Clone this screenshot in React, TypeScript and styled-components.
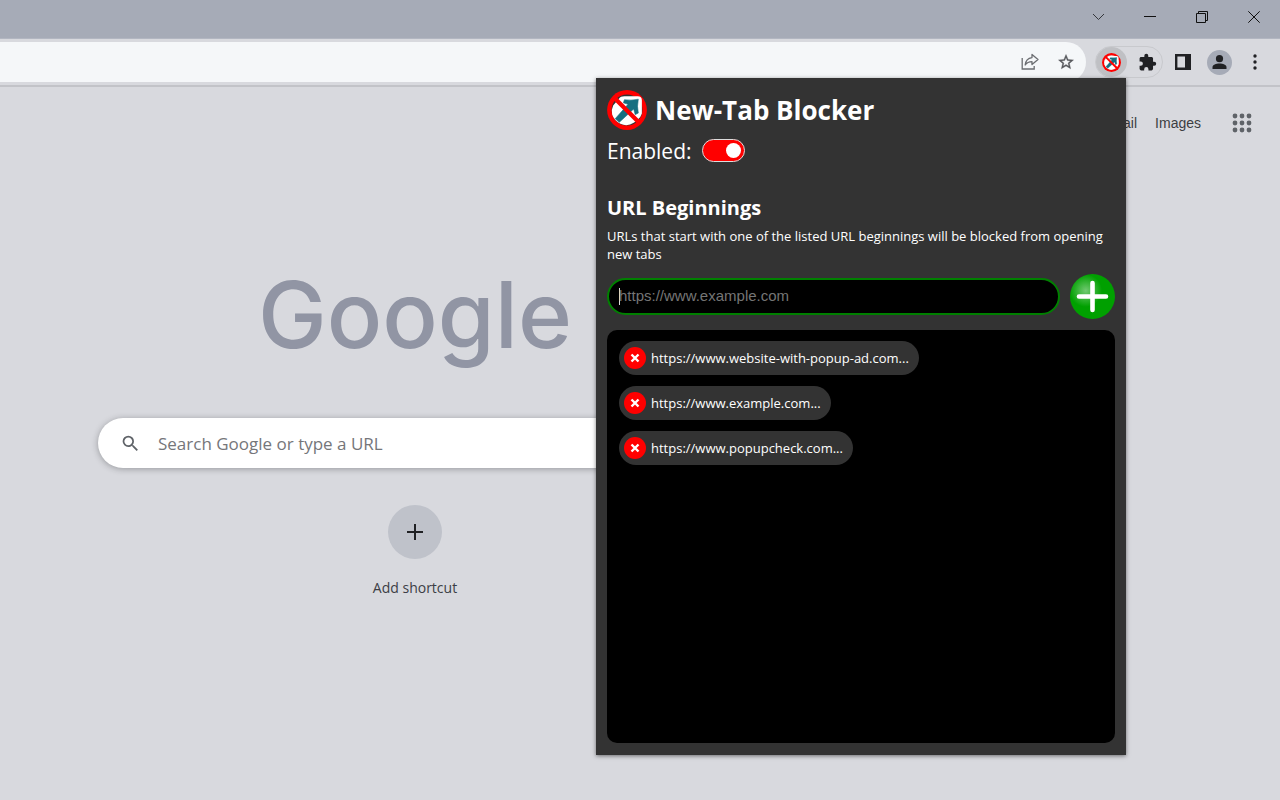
import React, { useState } from "react";
import styled, { createGlobalStyle } from "styled-components";

const ui = '"Open Sans", "Noto Sans", sans-serif';
const arial = '"Liberation Sans", Arial, sans-serif';

const GlobalStyle = createGlobalStyle`
  * { box-sizing: border-box; }
  body { margin: 0; background: #d8d9de; font-family: ${ui}; }
  button { border: 0; padding: 0; background: none; cursor: pointer; color: inherit; font-family: inherit; }
  h1, h2, p, ul { margin: 0; padding: 0; }
  svg { display: block; flex: none; }
`;

const Browser = styled.div`
  position: relative;
  min-height: 100vh;
  display: flex;
  flex-direction: column;
  overflow: hidden;
`;

const TitleBar = styled.header`
  height: 39px;
  padding-right: 14px;
  padding-bottom: 4px;
  display: flex;
  align-items: center;
  justify-content: flex-end;
  gap: 28px;
  background: #a6abb7;
  border-bottom: 1px solid #b2b6c1;
`;

const WindowButton = styled.button`
  width: 24px;
  height: 24px;
  display: grid;
  place-items: center;
`;

const Toolbar = styled.div`
  height: 48px;
  padding-right: 16px;
  display: flex;
  align-items: center;
  border-bottom: 2px solid #c2c3c8;
`;

const AddressBar = styled.div`
  flex: 1;
  min-width: 0;
  height: 40px;
  padding: 0 8px 0 16px;
  display: flex;
  align-items: center;
  gap: 12px;
  border-radius: 0 20px 20px 0;
  background: #f5f7f9;
`;

const AddressInput = styled.input`
  flex: 1;
  min-width: 0;
  height: 32px;
  border: 0;
  outline: 0;
  background: none;
  font: 16px ${ui};
`;

const IconButton = styled.button`
  width: 24px;
  height: 24px;
  display: grid;
  place-items: center;
`;

const Extensions = styled.div`
  width: 68px;
  height: 32px;
  margin: 0 8px 0 9px;
  padding-right: 3px;
  display: flex;
  align-items: center;
  justify-content: space-between;
  border: 1px solid #c8c9cd;
  border-radius: 16px;
`;

const ActiveExtension = styled.button`
  width: 31px;
  height: 30px;
  display: grid;
  place-items: center;
  border-radius: 50%;
  background: #bfc0c4;
`;

const ToolbarActions = styled.div`
  display: flex;
  align-items: center;
  gap: 12px;
`;

const Avatar = styled.button`
  width: 25px;
  height: 25px;
  display: grid;
  place-items: center;
  border-radius: 50%;
  background: #a6abb7;
`;

const MenuButton = styled.button`
  width: 18px;
  height: 24px;
  margin-left: 2px;
  display: grid;
  place-items: center;
`;

const TopLinks = styled.nav`
  height: 72px;
  padding-right: 28px;
  display: flex;
  align-items: center;
  justify-content: flex-end;
  gap: 18px;
`;

const TopLink = styled.a`
  font: 14px/20px ${arial};
  color: #3c3e42;
  text-decoration: none;
`;

const AppsButton = styled.button`
  width: 20px;
  height: 20px;
  margin-left: 13px;
`;

const NewTabPage = styled.main`
  padding-right: 450px;
  display: flex;
  flex-direction: column;
  align-items: center;
`;

const Wordmark = styled.div`
  margin-top: 96px;
  font: 500 92px/120px Inter, sans-serif;
  color: #9195a4;
`;

const SearchBox = styled.label`
  width: 634px;
  height: 50px;
  margin-top: 43px;
  padding: 0 22px;
  display: flex;
  align-items: center;
  gap: 17px;
  border-radius: 25px;
  background: #fff;
  box-shadow: 0 1px 6px rgba(32, 33, 36, 0.35);
`;

const SearchInput = styled.input`
  flex: 1;
  min-width: 0;
  height: 36px;
  padding: 0;
  border: 0;
  outline: 0;
  background: none;
  font: 17px ${ui};
  &::placeholder { color: #75767a; opacity: 1; }
`;

const Shortcut = styled.button`
  margin-top: 37px;
  display: flex;
  flex-direction: column;
  align-items: center;
  gap: 19px;
  font-size: 14px;
  line-height: 20px;
  color: #3c3e45;
`;

const ShortcutIcon = styled.span`
  width: 54px;
  height: 54px;
  display: grid;
  place-items: center;
  border-radius: 50%;
  background: #bfc2ca;
`;

const Popup = styled.section`
  position: absolute;
  top: 78px;
  right: 154px;
  width: 530px;
  padding: 12px 11px;
  background: #333;
  color: #fff;
  box-shadow: 0 1px 4px rgba(0, 0, 0, 0.5);
`;

const PopupHeader = styled.div`
  display: flex;
  align-items: center;
  gap: 8px;
`;

const PopupTitle = styled.h1`
  font-size: 26px;
  line-height: 38px;
  font-weight: 700;
`;

const EnableRow = styled.label`
  margin-top: 5px;
  display: flex;
  align-items: center;
  gap: 10px;
  font-size: 21px;
  line-height: 32px;
`;

const Toggle = styled.input`
  appearance: none;
  width: 43px;
  height: 23px;
  margin: 0 0 2px;
  padding: 3px;
  display: flex;
  justify-content: flex-start;
  border: 1px solid #ddd;
  border-radius: 12px;
  background: #777;
  cursor: pointer;
  &::before {
    content: "";
    width: 15px;
    height: 15px;
    border-radius: 50%;
    background: #fff;
  }
  &:checked { background: #f00; justify-content: flex-end; }
`;

const SectionTitle = styled.h2`
  margin-top: 27px;
  font-size: 20px;
  line-height: 28px;
  font-weight: 700;
`;

const Description = styled.p`
  margin-top: 5px;
  font-size: 13px;
  line-height: 18px;
`;

const AddForm = styled.form`
  margin-top: 11px;
  display: flex;
  align-items: center;
  gap: 10px;
`;

const UrlInput = styled.input`
  flex: 1;
  min-width: 0;
  height: 37px;
  padding: 0 10px 2px;
  border: 2px solid #008000;
  border-radius: 19px;
  outline: 0;
  background: #000;
  color: #fff;
  font: 15px ${arial};
  &::placeholder { color: #757575; opacity: 1; }
  &:placeholder-shown {
    caret-color: transparent;
    background: linear-gradient(#ddd, #ddd) 10px 8px / 1px 17px no-repeat #000;
  }
`;

const AddButton = styled.button`
  width: 45px;
  height: 45px;
`;

const UrlList = styled.ul`
  min-height: 413px;
  margin-top: 11px;
  padding: 11px 12px;
  display: flex;
  flex-direction: column;
  align-items: flex-start;
  gap: 11px;
  list-style: none;
  border-radius: 10px;
  background: #000;
`;

const UrlChip = styled.li`
  height: 34px;
  padding: 0 10px 0 5px;
  display: flex;
  align-items: center;
  gap: 5px;
  border-radius: 17px;
  background: #333;
  font-size: 13px;
  line-height: 18px;
`;

const RemoveButton = styled.button`
  width: 22px;
  height: 22px;
  display: grid;
  place-items: center;
  border-radius: 50%;
  background: #f00;
`;

function BlockerLogo({ size, hole = "#333" }: { size: number; hole?: string }) {
  return (
    <svg width={size} height={size} viewBox="0 0 39 39" aria-hidden="true">
      <circle cx="19.5" cy="19.5" r="19.4" fill="#f00" />
      <circle cx="19.5" cy="19.5" r="15" fill={hole} />
      <path d="M12 8q1-2 5-2h13q4 0 4 4v13q-1 4-5 7l-3 2q-6 4-13 1-6-3-8-9-1-5 1-9z" fill="#fff" />
      <path d="M17 9.500q6 1 13.500-.5-1.500 7 0 13.500l-3 1.500-1.500-5.500L12 31.500 8 28 20.500 14l-4.500-1.500z" fill="#166f80" stroke="#166f80" strokeWidth=".6" strokeLinejoin="round" />
      <path d="M7.500 8 31.500 32" stroke="#f00" strokeWidth="4.2" />
    </svg>
  );
}

function AddIcon() {
  return (
    <svg width="45" height="45" viewBox="0 0 45 45" aria-hidden="true">
      <defs>
        <radialGradient id="addGlow" cx="0.35" cy="0.37" r="0.36">
          <stop offset="0" stopColor="#71c971" />
          <stop offset="1" stopColor="#00a000" />
        </radialGradient>
      </defs>
      <circle cx="22.5" cy="22.5" r="22.5" fill="url(#addGlow)" />
      <path d="M22.5 9v27M9 22.5h27" stroke="#fff" strokeWidth="4.6" strokeLinecap="round" />
    </svg>
  );
}

const dots = [3, 10, 17];

export default function App() {
  const [enabled, setEnabled] = useState(true);
  const [draft, setDraft] = useState("");
  const [urls, setUrls] = useState([
    "https://www.website-with-popup-ad.com",
    "https://www.example.com",
    "https://www.popupcheck.com",
  ]);

  const addUrl = (event: React.FormEvent) => {
    event.preventDefault();
    if (draft) setUrls([...urls, draft]);
    setDraft("");
  };

  return (
    <Browser>
      <GlobalStyle />
      <TitleBar>
        <WindowButton aria-label="Search tabs">
          <svg width="12" height="12" viewBox="0 0 12 12" fill="none" stroke="#35373c"><path d="m1 3 5.500 5.500L12 3" /></svg>
        </WindowButton>
        <WindowButton aria-label="Minimize">
          <svg width="12" height="12" viewBox="0 0 12 12"><path d="M0 5.500h12" stroke="#111" /></svg>
        </WindowButton>
        <WindowButton aria-label="Restore">
          <svg width="12" height="12" viewBox="0 0 12 12" fill="none" stroke="#111"><path d="M.5 2.500h9v9h-9zM2.500 2.500v-2h9v9h-2" /></svg>
        </WindowButton>
        <WindowButton aria-label="Close">
          <svg width="12" height="12" viewBox="0 0 12 12"><path d="m.3.3 11.400 11.400M11.700.3.3 11.700" stroke="#111" /></svg>
        </WindowButton>
      </TitleBar>
      <Toolbar>
        <AddressBar>
          <AddressInput aria-label="Address" />
          <IconButton aria-label="Share">
            <svg width="18" height="18" viewBox="0 0 18 18" fill="none" stroke="#6b6d71" strokeWidth="1.300">
              <path d="M1.200 5v11h12v-3" />
              <path d="M11 1.500 17 6.500l-6 5V8.700q-4.500 0-6.800 3.300.6-6.600 6.800-7.400z" strokeLinejoin="round" />
            </svg>
          </IconButton>
          <IconButton aria-label="Bookmark">
            <svg width="18" height="18" viewBox="0 0 24 24" fill="#55575b">
              <path d="m22 9.240-7.190-.62L12 2 9.190 8.630 2 9.240l5.460 4.730L5.820 21 12 17.270 18.180 21l-1.630-7.030zM12 15.400l-3.760 2.270 1-4.280-3.320-2.880 4.380-.38L12 6.100l1.710 4.040 4.380.38-3.320 2.880 1 4.280z" stroke="#55575b" strokeWidth=".5" />
            </svg>
          </IconButton>
        </AddressBar>
        <Extensions>
          <ActiveExtension aria-label="New-Tab Blocker"><BlockerLogo size={19} hole="#d5dde2" /></ActiveExtension>
          <IconButton aria-label="Extensions">
            <svg width="19" height="19" viewBox="0 0 24 24" fill="#202124">
              <path d="M20.500 11H19V7c0-1.100-.9-2-2-2h-4V3.500a2.500 2.500 0 0 0-5 0V5H4c-1.100 0-2 .9-2 2v3.800h1.500a2.700 2.700 0 0 1 0 5.400H2V20c0 1.100.9 2 2 2h3.800v-1.500a2.700 2.700 0 0 1 5.400 0V22H17c1.100 0 2-.9 2-2v-4h1.500a2.500 2.500 0 0 0 0-5z" />
            </svg>
          </IconButton>
        </Extensions>
        <ToolbarActions>
          <IconButton aria-label="Side panel">
            <svg width="16" height="16" viewBox="0 0 16 16"><path d="M1.200 1.200h13.600v13.600H1.200z" fill="none" stroke="#202124" strokeWidth="2.400" /><path d="M10 1h5v14h-5z" fill="#202124" /></svg>
          </IconButton>
          <Avatar aria-label="Profile">
            <svg width="15" height="15" viewBox="0 0 15 15" fill="#202124"><circle cx="7.500" cy="3.700" r="3.600" /><path d="M.5 14v-2c0-2.200 3.500-3.500 7-3.500s7 1.300 7 3.500v2z" /></svg>
          </Avatar>
          <MenuButton aria-label="Menu">
            <svg width="4" height="16" viewBox="0 0 4 16" fill="#202124"><circle cx="2" cy="2" r="1.700" /><circle cx="2" cy="8" r="1.700" /><circle cx="2" cy="14" r="1.700" /></svg>
          </MenuButton>
        </ToolbarActions>
      </Toolbar>

      <TopLinks>
        <TopLink href="#gmail">Gmail</TopLink>
        <TopLink href="#images">Images</TopLink>
        <AppsButton aria-label="Google apps">
          <svg width="20" height="20" viewBox="0 0 20 20" fill="#5f6368">
            {dots.map((y) => dots.map((x) => <circle key={`${x}-${y}`} cx={x} cy={y} r="2.400" />))}
          </svg>
        </AppsButton>
      </TopLinks>

      <NewTabPage>
        <Wordmark>Google</Wordmark>
        <SearchBox>
          <svg width="21" height="21" viewBox="0 0 24 24" fill="#5f6368">
            <path d="M15.500 14h-.79l-.28-.27A6.470 6.470 0 0 0 16 9.500 6.500 6.500 0 1 0 9.500 16c1.610 0 3.090-.59 4.230-1.570l.27.28v.79l5 4.990L20.490 19zm-6 0C7.010 14 5 11.990 5 9.500S7.010 5 9.500 5 14 7.010 14 9.500 11.990 14 9.500 14z" />
          </svg>
          <SearchInput aria-label="Search" placeholder="Search Google or type a URL" />
        </SearchBox>
        <Shortcut>
          <ShortcutIcon>
            <svg width="16" height="16" viewBox="0 0 16 16"><path d="M8 0v16M0 8h16" stroke="#202124" strokeWidth="2" /></svg>
          </ShortcutIcon>
          Add shortcut
        </Shortcut>
      </NewTabPage>

      <Popup>
        <PopupHeader>
          <BlockerLogo size={40} />
          <PopupTitle>New-Tab Blocker</PopupTitle>
        </PopupHeader>
        <EnableRow>
          Enabled:
          <Toggle type="checkbox" checked={enabled} onChange={() => setEnabled(!enabled)} />
        </EnableRow>
        <SectionTitle>URL Beginnings</SectionTitle>
        <Description>
          URLs that start with one of the listed URL beginnings will be blocked from opening new tabs
        </Description>
        <AddForm onSubmit={addUrl}>
          <UrlInput
            autoFocus
            aria-label="URL beginning"
            placeholder="https://www.example.com"
            value={draft}
            onChange={(event) => setDraft(event.target.value)}
          />
          <AddButton type="submit" aria-label="Add URL"><AddIcon /></AddButton>
        </AddForm>
        <UrlList>
          {urls.map((url) => (
            <UrlChip key={url}>
              <RemoveButton aria-label={`Remove ${url}`} onClick={() => setUrls(urls.filter((item) => item !== url))}>
                <svg width="10" height="10" viewBox="0 0 10 10"><path d="m1.500 1.500 7 7M8.500 1.500l-7 7" stroke="#fff" strokeWidth="2.400" /></svg>
              </RemoveButton>
              {url}...
            </UrlChip>
          ))}
        </UrlList>
      </Popup>
    </Browser>
  );
}
